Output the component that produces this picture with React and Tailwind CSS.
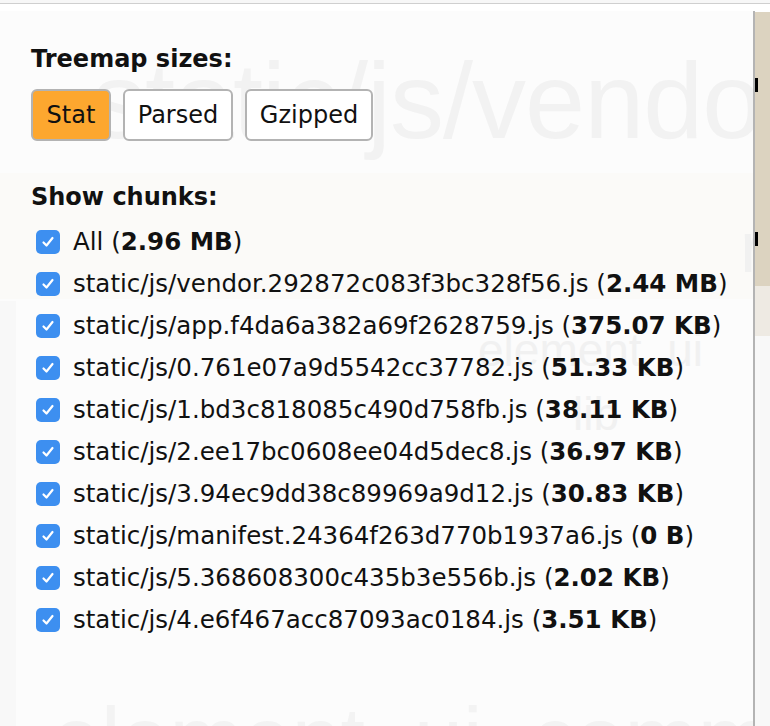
import { useState } from "react";

const chunks = [
  { label: "static/js/vendor.292872c083f3bc328f56.js", size: "2.44 MB" },
  { label: "static/js/app.f4da6a382a69f2628759.js", size: "375.07 KB" },
  { label: "static/js/0.761e07a9d5542cc37782.js", size: "51.33 KB" },
  { label: "static/js/1.bd3c818085c490d758fb.js", size: "38.11 KB" },
  { label: "static/js/2.ee17bc0608ee04d5dec8.js", size: "36.97 KB" },
  { label: "static/js/3.94ec9dd38c89969a9d12.js", size: "30.83 KB" },
  { label: "static/js/manifest.24364f263d770b1937a6.js", size: "0 B" },
  { label: "static/js/5.368608300c435b3e556b.js", size: "2.02 KB" },
  { label: "static/js/4.e6f467acc87093ac0184.js", size: "3.51 KB" },
];

const sizeModes = [
  { name: "Stat", w: "w-[80px]" },
  { name: "Parsed", w: "w-[110px]" },
  { name: "Gzipped", w: "w-[128px]" },
];

function Check() {
  return (
    <span className="w-[24px] h-[24px] rounded-[5px] bg-[#3d8ff0] flex items-center justify-center shrink-0">
      <svg width="16" height="16" viewBox="0 0 16 16" fill="none">
        <path d="M3.5 8.5 L6.5 11.5 L12.5 4" stroke="white" strokeWidth="2.2" strokeLinecap="round" strokeLinejoin="round" />
      </svg>
    </span>
  );
}

export default function App() {
  const [mode, setMode] = useState("Stat");

  return (
    <div className="w-[770px] h-[726px] overflow-hidden bg-[#f7f7f7] pt-[3px] font-['DejaVu_Sans',sans-serif] text-[#111]">
      <div className="h-[1px] bg-[#cfcfcf]" />
      <div className="flex h-[722px] bg-white">
        {/* sidebar */}
        <div className="relative w-[755px] shrink-0 border-r-2 border-[#b4b4b4] mt-[7px] bg-[#fcfcfc] overflow-hidden">
          {/* treemap labels showing through */}
          <div className="absolute left-0 right-0 top-[162px] h-[126px] bg-[#fbfaf8]" />
          <div className="absolute left-0 top-[290px] w-[16px] bottom-0 bg-[#f8f8f8]" />
          <span className="absolute left-[92px] top-[36px] text-[108px] leading-none font-['Liberation_Sans',sans-serif] text-[#f2f2f2] whitespace-nowrap tracking-[-1px]">
            static/js/vendor
          </span>
          <span className="absolute left-[740px] top-[200px] text-[72px] leading-none font-['Liberation_Sans',sans-serif] text-[#f1f1f1]">
            r
          </span>
          <span className="absolute left-[478px] top-[316px] text-[46px] leading-none font-['Liberation_Sans',sans-serif] text-[#f1f1f1] whitespace-nowrap">
            element_ui
          </span>
          <span className="absolute left-[573px] top-[380px] text-[46px] leading-none font-['Liberation_Sans',sans-serif] text-[#f1f1f1]">
            lib
          </span>
          <span className="absolute left-[52px] top-[683px] text-[88px] leading-none font-['Liberation_Sans',sans-serif] text-[#f3f3f3] whitespace-nowrap">
            element_ui_common
          </span>

          <div className="relative px-[31px] pt-[32px]">
            <div className="text-[24px] leading-[33px] font-bold">Treemap sizes:</div>
            <div className="flex gap-[12px] mt-[13px]">
              {sizeModes.map((m) => (
                <button
                  key={m.name}
                  onClick={() => setMode(m.name)}
                  className={
                    m.w +
                    " h-[52px] rounded-[6px] border-2 border-[#b3b3b3] text-[24px] " +
                    (mode === m.name ? "bg-[#fda72f]" : "bg-white")
                  }
                >
                  {m.name}
                </button>
              ))}
            </div>
            <div className="text-[24px] leading-[33px] font-bold mt-[40px]">Show chunks:</div>
            <div className="mt-[7px] flex flex-col">
              <label className="h-[42px] flex items-center gap-[13px] pl-[5px] text-[24.5px]">
                <Check />
                <span>
                  All (<b>2.96 MB</b>)
                </span>
              </label>
              {chunks.map((c) => (
                <label key={c.label} className="h-[42px] flex items-center gap-[13px] pl-[5px] text-[24.5px] whitespace-nowrap">
                  <Check />
                  <span>
                    {c.label} (<b>{c.size}</b>)
                  </span>
                </label>
              ))}
            </div>
          </div>
        </div>
        {/* treemap edge */}
        <div className="flex-1 flex flex-col">
          <div className="relative h-[274px] mt-[8px] bg-[#dcd3c0]">
            <span className="absolute left-0 top-[66px] w-[3px] h-[14px] bg-black" />
            <span className="absolute left-0 top-[220px] w-[3px] h-[14px] bg-black" />
          </div>
          <div className="h-[50px] bg-[#eeeae3]" />
          <div className="flex-1 bg-[#f8f8f8]" />
        </div>
      </div>
    </div>
  );
}
